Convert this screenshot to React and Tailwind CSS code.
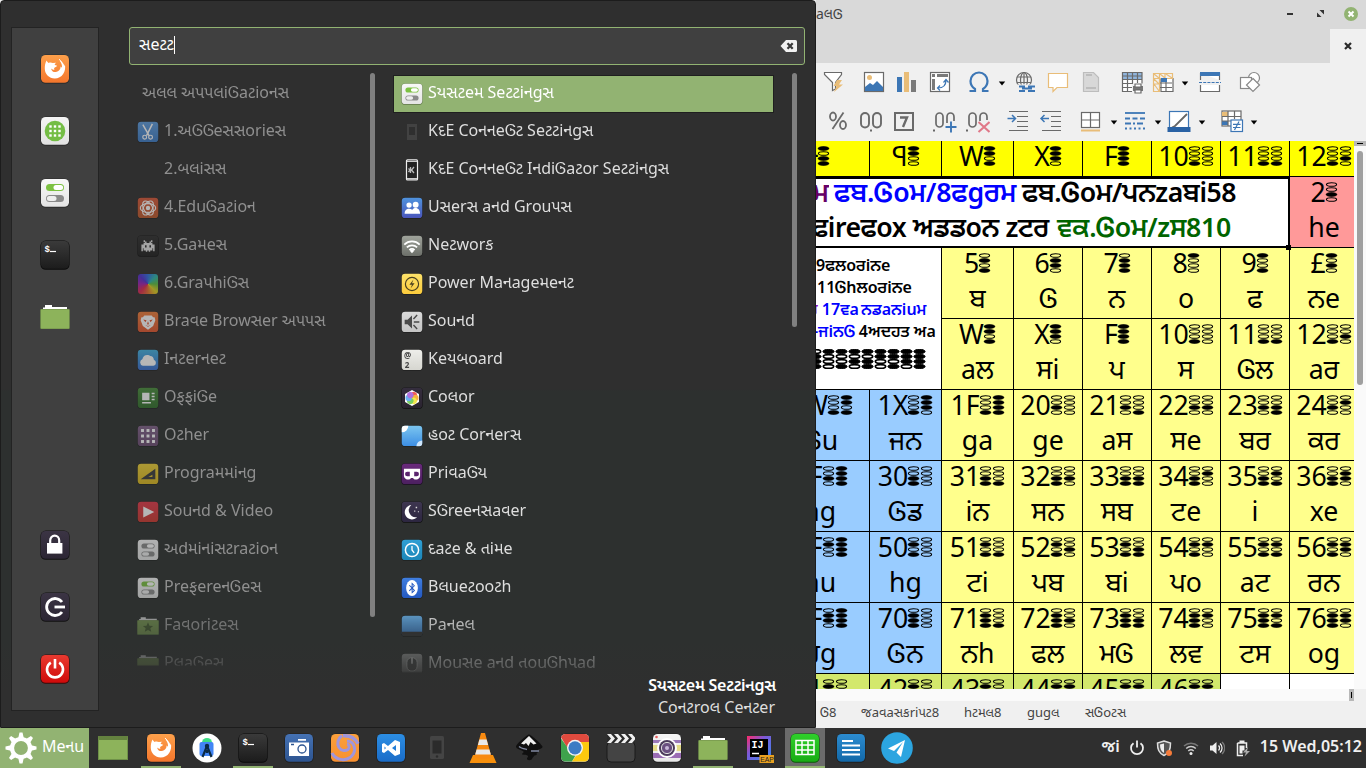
import React from "react";
import { FaBluetoothB } from "react-icons/fa";

const Tile = ({ id, from, to, edge = "#00000055", s = 30, children }) => (
  <svg width={s} height={s} viewBox="0 0 30 30" className="block shrink-0">
    <defs>
      <linearGradient id={id} x1="0" y1="0" x2="0" y2="1">
        <stop offset="0" stopColor={from} />
        <stop offset="1" stopColor={to} />
      </linearGradient>
    </defs>
    <rect x="0.4" y="0.6" width="29.2" height="29.2" rx="5.4" fill={edge} />
    <rect x="1" y="1" width="28" height="27.8" rx="4.6" fill={`url(#${id})`} />
    {children}
  </svg>
);

const Toggles = ({ on = "#7cc142", off = "#8a8a8a" }) => (
  <g>
    <rect x="6" y="6" width="18" height="7" rx="3.5" fill={on} />
    <rect x="13.5" y="7" width="9.6" height="5" rx="2.5" fill="#fff" />
    <rect x="6" y="17" width="18" height="7" rx="3.5" fill={off} />
    <rect x="6.9" y="18" width="9.6" height="5" rx="2.5" fill="#eee" />
  </g>
);

const IconFirefox = () => (
  <Tile id="ff" from="#fda04b" to="#f4762c">
    <path d="M6.600 6.500c.6 1.200 1.200 1.900 2 2.400 1.500-.5 3-.4 4.200.2l3.400-.4c-.9.7-1.500 1.500-1.500 2.300.9.1 1.800.2 2.300.7-.2 1.300-2.300 1.500-2.800 2.400-.2.700.1 1.300.3 1.600-1.400-.1-2.600-.3-3.300-1.300.1 2.400 2.400 4 4.800 3.600 3-.4 4.700-2.700 4.600-5.400.7.300 1 .8 1.300 1.400.5-2.800-.6-5.200-2.300-7.500 2.600 1 4.200 3 4.800 5.400.3-.6.400-1.200.3-1.900 2.100 7.200-2.800 14.600-10 14.600-5.500 0-9.700-4.300-9.900-9.500-.1-3.200.3-6 1.800-8.600z" fill="#fff" />
    <path d="M19 5.200c1.500 1 2.500 2.400 3 4" fill="none" stroke="#fff" strokeWidth="1" />
  </Tile>
);
const IconTerminal = () => (
  <Tile id="tm" from="#3a3a3a" to="#1c1c1c" edge="#0a0a0a">
    <text x="4.5" y="11.500" fontSize="9" fontWeight="bold" fill="#fff" fontFamily="Liberation Mono, monospace">$</text>
    <path d="M10 11.500h6" stroke="#fff" strokeWidth="1.200" />
  </Tile>
);
const IconFolder = ({ s = 30, star }) => (
  <svg width={s} height={s} viewBox="0 0 30 30" className="block shrink-0">
    <path d="M3 5.500h2V3h7v2h15v4H3z" fill="#fff" />
    <rect x="0.3" y="7" width="29.4" height="20" rx="0.8" fill="#6c8a48" />
    <rect x="0.8" y="7.4" width="28.4" height="19" rx="0.6" fill="#8db35b" />
    {star && <path d="M15 10l2 4.6 5 .4-3.800 3.200 1.200 4.800-4.400-2.600-4.400 2.600 1.200-4.800L8 15l5-.4z" fill="#4f6b34" />}
  </svg>
);
const IconLock = () => (
  <Tile id="lk" from="#3b3444" to="#2c2634" edge="#111">
    <rect x="7" y="13" width="15.4" height="10.600" fill="#fff" />
    <path d="M10.200 13.500v-3a4.500 4.800 0 0 1 9 0v3" fill="none" stroke="#fff" strokeWidth="2.200" />
  </Tile>
);
const IconLogout = () => (
  <Tile id="lo" from="#3b3444" to="#2c2634" edge="#111">
    <path d="M22 10a8.500 8.500 0 1 0 0 10" fill="none" stroke="#fff" strokeWidth="2.800" />
    <path d="M14.500 15H25" stroke="#fff" strokeWidth="2.800" />
  </Tile>
);
const IconPower = () => (
  <Tile id="pw" from="#e83a30" to="#d00a0a" edge="#3a0808">
    <path d="M10.800 8.600a8 8 0 1 0 8.400 0" fill="none" stroke="#fff" strokeWidth="2.600" />
    <path d="M15 5v9.500" stroke="#fff" strokeWidth="2.600" />
  </Tile>
);
const IconApps = () => (
  <Tile id="ap" from="#f4f4f4" to="#e2e2e2">
    <circle cx="15" cy="15" r="10.300" fill="#74bd45" />
    {[10.5, 15, 19.5].map((y) => [10.5, 15, 19.5].map((x) => (
      <rect key={x + "-" + y} x={x - 1.2} y={y - 1.2} width="2.400" height="2.400" fill="#fff" />
    )))}
  </Tile>
);
const IconSettings = ({ s = 30, id = "st", on, to = "#e4e4e4" }) => (
  <Tile id={id} from="#f8f8f8" to={to} s={s}><Toggles on={on} /></Tile>
);

/* category icons */
const C = {
  cut: () => (
    <Tile id="c1" s={22} from="#5f9ee0" to="#3d7cc6">
      <path d="M8 5l8.500 15M21 4l-8 16" stroke="#fff" strokeWidth="2" />
      <circle cx="10.500" cy="22" r="2.600" fill="none" stroke="#fff" strokeWidth="1.600" />
      <circle cx="18.500" cy="22" r="2.600" fill="none" stroke="#fff" strokeWidth="1.600" />
    </Tile>
  ),
  edu: () => (
    <Tile id="c2" s={22} from="#d9583a" to="#bd5a2c">
      {[0, 60, 120].map((a) => (
        <ellipse key={a} cx="15" cy="15" rx="10.500" ry="6" fill="none" stroke="#fff" strokeWidth="1.500" transform={`rotate(${a} 15 15)`} />
      ))}
      <circle cx="15" cy="15" r="3" fill="#fff" />
    </Tile>
  ),
  game: () => (
    <Tile id="c3" s={22} from="#2f2f2f" to="#202020" edge="#111">
      <path d="M9 7h2v2h2v2h4V9h2V7h2v3h-2v1h2v2h3v9h-2v-4h-1v3h-3v2h-2v-2h-2v2h-2v-2H9v-3H8v4H6v-9h3v-2h2v-1H9z" fill="#e4e4e4" />
      <path d="M11 14h2v3h-2zM17 14h2v3h-2z" fill="#222" />
    </Tile>
  ),
  brave: () => (
    <Tile id="c5" s={22} from="#f0803c" to="#e2562f">
      <path d="M10 6h10l2 2.500h2l1 4-3 8-7 5-7-5-3-8 1-4h2z" fill="#fff" />
      <path d="M8.500 11.500l4.500 1-1.500 3zM21.500 11.500l-4.500 1 1.500 3zM15 14l1.200 3.500L15 19l-1.200-1.500zM11 19l4 2.500 4-2.500-4 1.300z" fill="#e2562f" />
    </Tile>
  ),
  net: () => (
    <Tile id="c6" s={22} from="#43b4e2" to="#3a6ed0">
      <path d="M8 23a5 5 0 0 1-.5-9.500A6.500 6.500 0 0 1 18 9.500a5.500 5.500 0 0 1 5 5A4.500 4.500 0 0 1 22.500 23z" fill="#fff" />
    </Tile>
  ),
  office: () => (
    <Tile id="c7" s={22} from="#4b8f3e" to="#33702c">
      <path d="M7 8h10v10H7zM20 8h4v2h-4zM20 12h4v2h-4zM20 16h4v2h-4zM7 20.500h12v2H7z" fill="#fff" />
    </Tile>
  ),
  other: () => (
    <Tile id="c8" s={22} from="#84658c" to="#6d4d74">
      {[5.5, 13, 20.5].map((y) => [5.5, 13, 20.5].map((x) => (
        <rect key={x + "-" + y} x={x} y={y} width="4" height="4" fill="#fff" />
      )))}
    </Tile>
  ),
  prog: () => (
    <Tile id="c9" s={22} from="#f2d338" to="#dcb820">
      <path d="M25 8v14H5zM21 16l-5.500 3H21z" fillRule="evenodd" fill="#3c3c3c" />
    </Tile>
  ),
  video: () => (
    <Tile id="c10" s={22} from="#e63a4c" to="#cc3a30"><path d="M8.500 7.500l15 7.500-15 7.500z" fill="#fff" /></Tile>
  ),
};
const IconGraphics = () => (
  <span className="block h-[20px] w-[20px] rounded-[3px] bg-[conic-gradient(from_0deg,#2f6fe0,#2bb5b0,#5cc040,#e0d020,#e87030,#e02850,#a020b0,#5030d0,#2f6fe0)]" />
);

/* settings icons */
const R = {
  phone: () => (
    <svg width="22" height="22" viewBox="0 0 22 22"><path fillRule="evenodd" fill="#424242" d="M6 3h10v16H6zM8 6v8h6V6z" /></svg>
  ),
  phoneK: () => (
    <svg width="22" height="22" viewBox="0 0 22 22">
      <rect x="5.500" y="0.900" width="11" height="20" rx="1" fill="#222" stroke="#eee" strokeWidth="1.200" />
      <path d="M6 2.500h10M6 19.500h10" stroke="#ccc" />
      <path d="M9.500 8v6M13 8l-2.500 3 2.500 3M7.500 9.500l1.500 1.500-1.500 2" stroke="#bbb" strokeWidth="1.300" fill="none" />
    </svg>
  ),
  users: () => (
    <Tile id="r1" s={22} from="#4f93dd" to="#4a55bb">
      <circle cx="11" cy="11" r="3.600" fill="#fff" /><circle cx="20" cy="10.500" r="4" fill="#fff" />
      <path d="M5 23c0-5 2.500-7 6-7s4.500 2 5 3v4zM14.500 23c0-6 2-8 5.500-8s6 3 6 8z" fill="#fff" />
    </Tile>
  ),
  wifi: () => (
    <Tile id="r2" s={22} from="#a0a49c" to="#6c6f69">
      <path d="M4.500 13a15 15 0 0 1 21 0M8 17a10 10 0 0 1 14 0M11.500 20.500a5 5 0 0 1 7 0" fill="none" stroke="#fff" strokeWidth="2.400" />
      <path d="M15 25l-3-3.500a4 4 0 0 1 6 0z" fill="#fff" />
    </Tile>
  ),
  power: () => (
    <Tile id="r3" s={22} from="#fde26a" to="#fbcb3c">
      <circle cx="15" cy="15" r="9" fill="none" stroke="#4a4020" strokeWidth="1.600" />
      <path d="M17 9l-5.500 7h3.500L13 21l5.500-7H15z" fill="#4a4020" />
    </Tile>
  ),
  sound: () => (
    <Tile id="r4" s={22} from="#dadada" to="#c4c4c4">
      <path d="M5 12h4l6-6v18l-6-6H5z" fill="#4a4a4a" />
      <path d="M17.500 15H25M17 11l5-5.500M17 19l5 5.500" stroke="#4a4a4a" strokeWidth="1.900" />
    </Tile>
  ),
  keyb: () => (
    <Tile id="r5" s={22} from="#eeeeea" to="#d6d6d0">
      <text x="4" y="12.500" fontSize="11" fontWeight="bold" fill="#444" fontFamily="Noto Sans, sans-serif">@</text>
      <text x="5" y="26" fontSize="11" fontWeight="bold" fill="#444" fontFamily="Noto Sans, sans-serif">2</text>
    </Tile>
  ),
  color: () => (
    <Tile id="r6" s={22} from="#352e3e" to="#2a2430" edge="#111">
      <path d="M15 4l9.500 5.500v11L15 26l-9.500-5.500v-11z" fill="#fff" />
      {["#f05a5a", "#f8b040", "#f4e850", "#7ad060", "#6ab0f0", "#b070e0"].map((c, i) => (
        <circle key={c} cx="15" cy="10.400" r="4.300" fill={c} transform={`rotate(${i * 60 + 30} 15 15)`} />
      ))}
    </Tile>
  ),
  corners: () => (
    <Tile id="r7" s={22} from="#7cc6f0" to="#3c8ee4">
      <path d="M1 10V5a4 4 0 0 1 4-4h5a9 9 0 0 1-9 9z" fill="#fff" /><path d="M29 21v4a4 4 0 0 1-4 4h-4a8 8 0 0 1 8-8z" fill="#cfe6fb" />
    </Tile>
  ),
  priv: () => (
    <Tile id="r8" s={22} from="#6a2a7c" to="#4c2060" edge="#1c0c24">
      <path fillRule="evenodd" d="M4 8h22v10c-1 5-8 6-9.500 2.500h-3C12 24 5 23 4 18zM8.500 12a1.500 1.500 0 0 0 0 6H12v-6zM21.500 12H18v6h3.500a1.500 1.500 0 0 0 0-6z" fill="#fff" />
    </Tile>
  ),
  saver: () => (
    <Tile id="r9" s={22} from="#3e3650" to="#2c2640" edge="#111">
      <path d="M14 5.500a9.800 9.800 0 1 0 8 16.500A9.500 9.500 0 0 1 14 5.500z" fill="#fff" />
      <path d="M20 8h2v2h-2zM23 14h1.500v1.500H23zM18 13h1.500v1.500H18z" fill="#ddd" />
    </Tile>
  ),
  clock: () => (
    <Tile id="r10" s={22} from="#2f9fd4" to="#1c86b8">
      <circle cx="15" cy="15" r="9" fill="none" stroke="#fff" strokeWidth="2" />
      <path d="M15 9.500V15l3 4" stroke="#fff" strokeWidth="1.800" fill="none" />
    </Tile>
  ),
  blue: () => (
    <Tile id="r11" s={22} from="#3f7ee0" to="#2458c0">
      <ellipse cx="15" cy="15" rx="8" ry="11" fill="#fff" />
      <FaBluetoothB x="7" y="7" width="16" height="16" color="#2458c0" />
    </Tile>
  ),
  panel: () => (
    <Tile id="r12" s={22} from="#64a6d8" to="#3a72b4" edge="#181818"><path d="M1 23h28v2a4 4 0 0 1-4 4H5a4 4 0 0 1-4-4z" fill="#333" /></Tile>
  ),
  mouse: () => (
    <Tile id="r13" s={22} from="#9a9a9a" to="#7a7a7a">
      <path d="M8 13c0-9 14-9 14 0v5c0 9-14 9-14 0z" fill="#444" stroke="#ccc" strokeWidth="1.200" /><path d="M15 6.500v8" stroke="#ccc" strokeWidth="2.400" />
    </Tile>
  ),
};

const cats = [
  ["1.અᏣᏣeસસorieસ", C.cut], ["2.બલiસસ", null], ["4.EduᏣaટioન", C.edu], ["5.Gaમeસ", C.game],
  ["6.GraપhiᏣસ", IconGraphics], ["Braવe Browસer અપપસ", C.brave], ["Iનટerનeટ", C.net], ["OફફiᏣe", C.office],
  ["Oટher", C.other], ["Prograમમiનg", C.prog], ["Souનd & Video", C.video],
  ["અdમiનiસટraટioન", () => <IconSettings s={22} id="c11" on="#8a8a8a" />],
  ["PreફereનᏣeસ", () => <IconSettings s={22} id="c12" />],
  ["Faવoriટeસ", () => <IconFolder s={22} star />],
  ["PલaᏣeસ", () => <IconFolder s={22} />],
];

const setts = [
  ["Sયસટeમ Seટટiનgસ", () => <IconSettings s={22} id="r0" />], ["KદE CoનનeᏣટ Seટટiનgસ", R.phone],
  ["KદE CoનનeᏣટ IનdiᏣaટor Seટટiનgસ", R.phoneK], ["Uસerસ aનd Grouપસ", R.users], ["Neટworક", R.wifi],
  ["Power Maનageમeનટ", R.power], ["Souનd", R.sound], ["Keયબoard", R.keyb], ["Coલor", R.color],
  ["હoટ Corનerસ", R.corners], ["PriવaᏣય", R.priv], ["SᏣreeનસaવer", R.saver], ["દaટe & તiમe", R.clock],
  ["Bલueટooટh", R.blue], ["Paનeલ", R.panel], ["Mouસe aનd તouᏣhપad", R.mouse],
];
const fix = (t) => t.replaceAll("Ꮳ", "Ꮆ");

function Menu() {
  return (
    <div className="flex h-[728px] w-[816px] shrink-0 rounded-t-[4px] border border-[#1c1c1c] bg-[linear-gradient(#2f2f2f_0,#2f2f2f_388px,#2d302f_390px,#2d302f_640px,#2f2f2f_690px)] pt-[26px] pl-[10px]">
      <div className="flex h-[684px] w-[88px] flex-col items-center border border-[#232323] bg-[#404040] pt-[26px] pb-[26px]">
        <div className="flex flex-col gap-8">
          <IconFirefox /><IconApps /><IconSettings /><IconTerminal /><IconFolder />
        </div>
        <div className="mt-auto flex flex-col gap-8">
          <IconLock /><IconLogout /><IconPower />
        </div>
      </div>
      <div className="ml-[30px] w-[676px]">
        <div className="flex h-[38px] items-center justify-between rounded-[3px] border border-[#92b372] bg-[#404040] pr-[7px] pl-[9px]">
          <div className="flex items-center pb-[3px] text-[16px] text-white">
            <span className="pb-px">સeટટ</span><span className="h-[18px] w-px bg-white" />
          </div>
          <svg width="17" height="12" viewBox="0 0 17 12"><path d="M6 0h9.500A1.500 1.500 0 0 1 17 1.500v9a1.500 1.500 0 0 1-1.500 1.500H6L0.500 6z" fill="#f2f2f2" /><path d="M7.500 3.200l5.200 5.600M12.700 3.200L7.500 8.800" stroke="#3a3a3a" strokeWidth="2.200" /></svg>
        </div>
        <div className="flex h-[609px] pt-[8px]">
          <div className="h-[593px] w-[241px] overflow-hidden pl-[8px] text-[16px] text-[#8f8f8f] [mask-image:linear-gradient(black_520px,rgba(0,0,0,.3)_592px,transparent_593px)]">
            <div className="mt-[2px] flex h-[38px] items-center pb-[4px] pl-[5px]">{fix("અલલ અપપલiᏣaટioનસ")}</div>
            {cats.map(([label, Icon]) => (
              <div key={label} className="flex h-[38px] items-center whitespace-nowrap">
                <span className="flex w-[22px] justify-center opacity-65">{Icon && <Icon />}</span>
                <span className="pb-[4px] pl-[5px]">{fix(label)}</span>
              </div>
            ))}
          </div>
          <div className="h-[544px] w-[5px] rounded-full bg-[#808080]" />
          <div className="ml-[18px] h-[601px] w-[381px] overflow-hidden pt-[2px] text-[16px] text-[#dedede] [mask-image:linear-gradient(black_530px,rgba(0,0,0,.22)_598px,transparent_600px)]">
            {setts.map(([label, Icon], i) => (
              <div key={label} className={"flex h-[38px] items-center border whitespace-nowrap pl-[7px] " + (i === 0 ? "border-[#1f1f1f] bg-[#92b372] text-white" : "border-transparent")}>
                <span className="flex w-[22px] justify-center">{<Icon />}</span>
                <span className="pb-[4px] pl-[5px]">{fix(label)}</span>
              </div>
            ))}
          </div>
          <div className="ml-[18px] h-[254px] w-[5px] rounded-full bg-[#808080]" />
        </div>
        <div className="pr-[29px] text-right text-[16px] leading-[22px] text-[#dedede]">
          <div className="font-semibold tracking-[-0.2px] text-white">Sયસટeમ Seટટiનgસ</div>
          <div className="pr-px">Coનટroલ Ceનટer</div>
        </div>
      </div>
    </div>
  );
}

/* four stacked ovals, filled where the bit is set */
const Bits = ({ v, bold }) => (
  <svg width="13" height="20" viewBox="0 0 13 20" className="inline-block shrink-0">
    {[8, 4, 2, 1].map((b, i) => (
      <ellipse key={b} cx="6.500" cy={2.5 + i * 5} rx={v & b ? 5.6 : 5.1} ry={v & b ? 2.2 : bold ? 1.9 : 1.8} fill={v & b ? "#000" : "none"} stroke="#000" strokeWidth={v & b ? (bold ? 1 : 0.3) : bold ? 1.8 : 1.05} />
    ))}
  </svg>
);
const digitValue = (ch) => "0123456789£ɈꟼWXF".indexOf(ch);
const Num = ({ t }) => (
  <div className="flex h-[35px] items-center justify-center whitespace-nowrap">
    <span>{t}</span>
    <span className="-ml-[1px] flex">{[...t].map((ch, i) => <Bits key={i} v={digitValue(ch)} />)}</span>
  </div>
);

const Cell = ({ n, t, bg }) => (
  <div className={"overflow-hidden border-r border-b border-black " + bg}>
    <div className="-mt-[3px]">{n && <Num t={n} />}</div>
    {t && <div className="h-[35px] text-center leading-[35px] whitespace-nowrap">{fix(t)}</div>}
  </div>
);

const Y = "bg-[#ffff8c]";
const B = "bg-[#99ccff]";
const body = [
  [["1W", "Ꮳu"], ["1X", "ਜਨ"], ["1F", "ga"], ["20", "ge"], ["21", "aਸ"], ["22", "ਸe"], ["23", "ਬਰ"], ["24", "ਕਰ"]],
  [["2F", "ag"], ["30", "Ꮳਡ"], ["31", "iਨ"], ["32", "ਸਨ"], ["33", "ਸਬ"], ["34", "ਟe"], ["35", "i"], ["36", "xe"]],
  [["4F", "au"], ["50", "hg"], ["51", "ਟi"], ["52", "ਪਬ"], ["53", "ਬi"], ["54", "ਪo"], ["55", "aਟ"], ["56", "ਰਨ"]],
  [["6F", "ਰg"], ["70", "Ꮳਨ"], ["71", "ਨh"], ["72", "ਫਲ"], ["73", "ਮᏣ"], ["74", "ਲਵ"], ["75", "ਟਸ"], ["76", "og"]],
];

function Sheet() {
  return (
    <div className="flex h-[548px]">
      <div className="w-[538px] overflow-hidden bg-white">
        <div className="-ml-[44px] grid w-[587px] grid-cols-[98px_72px_72px_69px_69px_69px_69px_69px] grid-rows-[36px_71px_71px_71px_71px_71px_71px_71px_71px] text-[26.67px] text-black">
          {["Ɉ", "ꟼ", "W", "X", "F", "10", "11", "12"].map((n) => (
            <Cell key={n} n={n} bg="bg-[#ffff00]" />
          ))}
          <div className="relative col-span-7 border-t-2 border-r-2 border-b-2 border-black bg-white pl-[42px] text-[26.67px] leading-[35px] font-semibold whitespace-nowrap">
            <div className="-mt-[5px] flex">
              <span className="mr-[5px] flex w-[15px] justify-end overflow-hidden text-[#660066]">ਮ</span>
              <span className="w-[188px] tracking-[-0.15px] text-[#0000ff]">{fix("ਫਬ.Ꮳoਮ/8ਫgਰਮ")}</span>
              <span className="tracking-[-0.5px]">{fix("ਫਬ.Ꮳoਮ/ਪਨzaਬi58")}</span>
            </div>
            <div className="-ml-[12px] flex">
              <span className="flex w-[255px] justify-end pr-[8px] tracking-[-0.5px]">ਫireਫox ਅਡਡoਨ zਟਰ</span>
              <span className="tracking-[-0.35px] text-[#006400]">{fix("ਵਕ.Ꮳoਮ/zਸ810")}</span>
            </div>
            <div className="absolute -right-[3px] -bottom-[4px] h-[5px] w-[5px] bg-black" />
          </div>
          <Cell n="2" t="he" bg="bg-[#ff9999]" />
          <div className="col-span-2 row-span-2 overflow-hidden border-r border-b border-black bg-white pt-[6px] text-[16px] leading-[22px] font-semibold whitespace-nowrap">
            <div className="pl-[44px]">9ਫਲoਰiਨe</div>
            <div className="pl-[45px]">{fix("11Ꮳhਲoਰiਨe")}</div>
            <div className="pl-[36px] text-[#0000ff]"><span className="text-[#8800cc]">ਰ</span> 17ਵa<span className="pl-[2px]">ਨਡaਨiuਮ</span></div>
            <div className="pl-[41px]"><span className="text-[#0000ff]">{fix("-ਜiਨᏣ")}</span> 4ਅਦਹਤ ਅa</div>
            <div className="mt-[7px] flex pl-[37px]">
              {[7, 8, 9, 10, 11, 12, 13, 14, 15].map((v) => <Bits key={v} v={v} bold />)}
            </div>
          </div>
          {[["5", "ਬ"], ["6", "Ꮳ"], ["7", "ਨ"], ["8", "o"], ["9", "ਫ"], ["£", "ਨe"]].map(([n, t]) => <Cell key={n} n={n} t={t} bg={Y} />)}
          {[["W", "aਲ"], ["X", "ਸi"], ["F", "ਪ"], ["10", "ਸ"], ["11", "Ꮳਲ"], ["12", "aਰ"]].map(([n, t]) => <Cell key={n} n={n} t={t} bg={Y} />)}
          {body.flatMap((row) => row.map(([n, t], i) => <Cell key={n} n={n} t={t} bg={i < 2 ? B : Y} />))}
          {["41", "42", "43", "44", "45", "46"].map((n) => <Cell key={n} n={n} bg="bg-[#d3e86c]" />)}
          <div className="border-r border-black bg-white" />
          <div className="bg-white" />
        </div>
      </div>
      <div className="flex w-[12px] flex-col items-center bg-[#fafafa]">
        <div className="flex h-[5px] w-[12px] items-center justify-center bg-[#b8b8b8]"><span className="h-px w-[6px] bg-black" /></div>
        <div className="mt-[5px] h-[234px] w-[6px] rounded-full bg-[#a0a0a0]" />
      </div>
    </div>
  );
}

const Ic = ({ m = "", children }) => (
  <svg width="24" height="24" viewBox="0 0 24 24" fill="none" stroke="#6a6a6a" strokeWidth="1.200" className={"shrink-0 " + m}>{children}</svg>
);
const Arrow = ({ m = "ml-[6px]" }) => (
  <svg width="8" height="24" viewBox="0 0 8 24" className={"shrink-0 " + m}><path d="M0.800 11.500h6.400L4 15.500z" fill="#000" /></svg>
);
const blue = "#3c76b5";
const tan = "#e9bd78";

function Toolbars() {
  return (
    <div className="h-[78px] bg-[#f0f0f0] pt-[7px]">
      <div className="flex">
        <Ic m="ml-[6px]"><path d="M2.500 2.500h17v2l-6 8v6.500l-3 1.500v-8l-8-8z" fill="#fff" /><path d="M15 10h5l-3 4.500h4L12 22l2.500-6h-3z" fill={tan} stroke="none" /></Ic>
        <Ic m="ml-[16px]"><rect x="2.500" y="2.500" width="19" height="19" fill="#fff" /><circle cx="7.500" cy="7.500" r="2.500" fill={tan} stroke="none" /><path d="M3 21v-4l5-4 3 2 4-4 6 6v4z" fill={blue} stroke="none" /></Ic>
        <Ic m="ml-[9px]"><g stroke="none"><rect x="2" y="7" width="5" height="15" fill={blue} /><rect x="9" y="2" width="5" height="20" fill={tan} /><rect x="16" y="10" width="5" height="12" fill="#7a7a7a" /></g></Ic>
        <Ic m="ml-[9px]"><rect x="2.500" y="2.500" width="19" height="19" fill="#fff" /><path d="M4 4h3v3H4zM9 4h11v3H9zM4 9h3v11H4z" fill="#7a7a7a" stroke="none" /><path d="M10 18c5 0 8-3 8-8M15.500 12.500L18 9.500l2.500 3M12 15.500L9.500 18l2.500 2.500" stroke={blue} /></Ic>
        <Ic m="ml-[15px]"><path d="M2.500 21h5.500v-2c-3-2-4.500-4.500-4.500-8a8.500 8.500 0 0 1 17 0c0 3.500-1.500 6-4.500 8v2h5.500" stroke={blue} strokeWidth="2.200" /></Ic>
        <Arrow m="ml-[7px]" />
        <Ic m="ml-[8px]"><circle cx="10" cy="10" r="7.500" /><ellipse cx="10" cy="10" rx="3.500" ry="7.500" /><path d="M10 2.500v12M3 7h14M3 12.500h14" /><rect x="3" y="14.500" width="20" height="8" fill="#f0f0f0" stroke="none" /><path d="M5 16.500h6M14 16.500h7M8 18.500h10M5 21h6M14 21h7" stroke={blue} strokeWidth="1.900" /></Ic>
        <Ic m="ml-[8px]"><path d="M2.500 3.500h19v14H11l-4 4v-4H2.500z" fill="#fff" stroke={tan} /></Ic>
        <Ic m="ml-[9px]"><path d="M4.500 2.500h10l5 5v14h-15z" fill="#d8d8d8" stroke="#bdbdbd" /><path d="M7 5h6M7 18h10" stroke="#bdbdbd" strokeWidth="1.800" /></Ic>
        <Ic m="ml-[17px]"><path d="M2 2h20v12H12v8H2z" fill="#fff" stroke="none" /><rect x="2" y="2" width="20" height="7" fill="#8fb4dc" stroke="none" /><path d="M2.500 2v19.500H12M2 2.500h20v11M2 6h20M2 9.500h20M2 13.500h11M2 17.500h10M7.500 2v19M12.500 2v12M17.500 2v11" /><path d="M13 16h10v5H13z" fill="#777" stroke="none" /><path d="M15 14h6v3h-6zM15 20h6v3h-6z" fill="#fff" /></Ic>
        <Ic m="ml-[7px]"><path d="M10 8.500h12v13H10z" fill="#fff" /><path d="M2.500 3.500h19v5h-13v13h-6zM2.500 8.500h6M8.500 3.500v5M14 3.500v5M2.500 14h6M3 4l5 4M3 9l5 5M3 14l5 7M9 4l5 4M15 4l6 4" stroke={tan} /><path d="M9 13h12M9 17.500h12M15 9v12.500" /><rect x="10" y="8" width="6" height="4" fill={blue} stroke="none" /></Ic>
        <Arrow />
        <Ic m="ml-[9px]"><path d="M2.500 3h19v7M2.500 3v7M2.500 15v6.500h19V15" fill="#fff" /><rect x="2" y="2" width="20" height="4" fill={blue} stroke="none" /><path d="M1 12.500h22" stroke={blue} strokeDasharray="3 1.200" /></Ic>
        <Ic m="ml-[16px]"><circle cx="16" cy="8" r="5.500" fill="#fff" stroke="#888" /><rect x="2.500" y="7.500" width="11" height="11" fill="#fff" stroke="#888" /><path d="M15 8.500l6.500 6.500-6.500 6.500L8.500 15z" fill="#fff" stroke="#888" /></Ic>
      </div>
      <div className="mt-[15px] flex">
        <Ic m="ml-[10px]"><ellipse cx="7" cy="7.500" rx="3" ry="4" strokeWidth="1.800" /><ellipse cx="17" cy="16" rx="3" ry="4" strokeWidth="1.800" /><path d="M17.500 3.500L6.500 20" strokeWidth="1.800" /></Ic>
        <Ic m="ml-[9px]"><rect x="2" y="4" width="8" height="14.500" rx="4" strokeWidth="1.900" /><rect x="14" y="4" width="8" height="14.500" rx="4" strokeWidth="1.900" /><rect x="11" y="20.500" width="2" height="2" fill="#6a6a6a" stroke="none" /></Ic>
        <Ic m="ml-[9px]"><rect x="3" y="4" width="18" height="17" strokeWidth="2" /><path d="M8 8.500h7l-4 9.500" strokeWidth="2.400" /></Ic>
        <Ic m="ml-[17px]"><rect x="3" y="4" width="7" height="14" rx="3.500" strokeWidth="1.700" /><path d="M14 14V8a3.500 4 0 0 1 7 0v4" strokeWidth="1.700" /><path d="M0 20.500h2v2H0z" fill="#666" stroke="none" /><path d="M18 12.500v11M12.500 18h11" stroke={blue} strokeWidth="1.900" /></Ic>
        <Ic m="ml-[9px]"><rect x="3" y="4" width="7" height="14" rx="3.500" strokeWidth="1.700" /><path d="M14 12V8a3.500 4 0 0 1 7 0v3" strokeWidth="1.700" /><path d="M0 20.500h2v2H0z" fill="#666" stroke="none" /><path d="M12.500 13l11 10M23.500 13l-11 10" stroke="#e07888" strokeWidth="2" /></Ic>
        <Ic m="ml-[16px]"><path d="M3 2.500h19M11 7.500h11M11 12.500h11M11 17.500h11M3 21.500h19" /><path d="M1.500 9.500h8M6 6l3.500 3.500L6 13" stroke={blue} strokeWidth="1.500" /></Ic>
        <Ic m="ml-[9px]"><path d="M3 2.500h19M12 7.500h10M12 12.500h10M12 17.500h10M3 21.500h19" /><path d="M2 9.500h8M5.500 6L2 9.500 5.500 13" stroke={blue} strokeWidth="1.500" /></Ic>
        <Ic m="ml-[16px]"><rect x="2.500" y="3.500" width="18" height="15" fill="#fff" /><path d="M11.500 3.500v15M2.500 11h18" /><path d="M2 21.500h19" stroke={tan} strokeWidth="2" /></Ic>
        <Arrow m="ml-[7px]" />
        <Ic m="ml-[5px]"><path d="M2 4h20" stroke={blue} strokeWidth="1.800" /><path d="M2 9.500h20" stroke={blue} strokeWidth="1.800" strokeDasharray="5 2.500" /><path d="M2 14.500h20" stroke={blue} strokeWidth="1.800" strokeDasharray="6 2 2 2" /><path d="M2 19.500h20" stroke={blue} strokeWidth="1.800" strokeDasharray="2 2.500" /></Ic>
        <Arrow m="ml-[7px]" />
        <Ic m="ml-[5px]"><rect x="2.500" y="2.500" width="19" height="17" fill="#fff" stroke={blue} /><path d="M20 5L8 17l-3 1.500" stroke="#666" strokeWidth="1.800" /><rect x="0.500" y="18" width="23" height="5" fill="#2a62a4" stroke="none" /></Ic>
        <Arrow m="ml-[7px]" />
        <Ic m="ml-[14px]"><rect x="2" y="2" width="19" height="15" fill="#fff" /><rect x="2" y="3" width="6" height="4" fill={tan} stroke="none" /><rect x="2" y="12" width="6" height="4" fill={blue} stroke="none" /><path d="M2 7.500h19M2 12h10M8 2v15M14.500 2v8" /><rect x="11" y="11" width="11.500" height="11.500" fill="#fff" stroke={blue} /><path d="M13 15.300h7.500M13 18.500h7.500M19 12.500l-4.500 8.500" stroke={blue} /></Ic>
        <Arrow m="ml-[6px]" />
      </div>
    </div>
  );
}

function SheetWindow() {
  return (
    <div className="flex h-[728px] w-[550px] flex-col overflow-hidden bg-[#f0f0f0] text-[13px] text-[#444]">
      <div className="flex h-[29px] items-center bg-[#d9d9d9] pb-[2px]">
        <span className="text-[14px]">{fix("aલᏣ")}</span>
        <div className="ml-auto flex items-center gap-[25px] pr-[8px]">
          <span className="-mr-[1px] h-[2px] w-[6px] bg-[#333]" />
          <svg width="7" height="7" viewBox="0 0 7 7"><path d="M2.500 0H7v4.500zM0 2.500L4.500 7H0z" fill="#333" /></svg>
          <svg width="14" height="14" viewBox="0 0 14 14" className="-ml-[5px]"><circle cx="7" cy="7" r="7" fill="#92b372" /><path d="M4.500 4.500l5 5M9.500 4.500l-5 5" stroke="#fff" strokeWidth="2" /></svg>
        </div>
      </div>
      <div className="flex h-[34px] justify-end bg-[#d9d9d9]">
        <div className="flex w-[36px] items-center justify-center bg-[#f0f0f0]">
          <svg width="8" height="8" viewBox="0 0 8 8"><path d="M1 1l6 6M7 1L1 7" stroke="#2a2a2a" strokeWidth="2.200" /></svg>
        </div>
      </div>
      <Toolbars />
      <Sheet />
      <div className="flex h-[12px] bg-[#f0f0f0]">
        <div className="flex w-[538px] justify-end bg-[#fafafa]"><div className="flex w-[5px] items-center justify-center bg-[#b8b8b8]"><span className="h-[6px] w-px bg-black" /></div></div>
      </div>
      <div className="flex h-[26px] items-center pb-[2px] pl-[4px] text-[13px] whitespace-nowrap">
        <span className="w-[41px]">{fix("Ꮳ8")}</span>
        <span className="w-[103px]">જaવaસકriપટ8</span>
        <span className="w-[63px]">hટમલ8</span>
        <span className="w-[58px]">gugલ</span>
        <span>{fix("સᏣoટસ")}</span>
      </div>
    </div>
  );
}

const Slot = ({ open, active, children }) => (
  <div className={"relative mr-[6px] flex h-[40px] w-[40px] shrink-0 items-center justify-center " + (active ? "bg-[#6b6b6b]" : "")}>
    {children}
    {open && <div className="absolute bottom-0 left-0 h-[2px] w-[40px] bg-[#92b372]" />}
  </div>
);

function Taskbar() {
  return (
    <div className="flex h-[40px] items-center bg-[#2f2f2f] text-white">
      <div className="flex h-[40px] w-[89px] items-center bg-[#92b372] pl-[5px]">
        <svg width="32" height="32" viewBox="0 0 32 32">
          <circle cx="16" cy="16" r="9" fill="none" stroke="#fff" strokeWidth="4.200" />
          {[0, 45, 90, 135, 180, 225, 270, 315].map((a) => <path key={a} d="M13 7l1.500-6.500h3L19 7z" fill="#fff" transform={`rotate(${a} 16 16)`} />)}
        </svg>
        <span className="pb-[4px] pl-[5px] text-[16px]">Meનu</span>
      </div>
      <div className="mr-[13px] ml-[9px] h-[24px] w-[30px] border border-[#6f9148] border-t-[4px] border-t-[#64823f] bg-[#8db35b]" />
      <Slot open><IconFirefox /></Slot>
      <Slot>
        <svg width="30" height="30" viewBox="0 0 30 30"><circle cx="15" cy="15" r="14.500" fill="#fff" /><path d="M10 9.500a5 4.500 0 0 1 10 0z" fill="#3ddc84" /><rect x="7.500" y="9" width="14" height="14" rx="2" fill="#4285f4" /><path d="M15 13l-4.500 11M15 13l4.500 11M15 17v3" stroke="#0b2a44" strokeWidth="2.200" /><circle cx="15" cy="13" r="2.200" fill="#0b2a44" /></svg>
      </Slot>
      <Slot open><IconTerminal /></Slot>
      <Slot>
        <Tile id="t1" from="#4572b4" to="#2d5490"><path d="M14 6h8v1.800h-8zM5 9.500h20V23H5z" fill="#fff" /><path d="M7 11.500h3" stroke="#2d5490" strokeWidth="1.500" /><circle cx="18" cy="16" r="4" fill="#fff" stroke="#2d5490" strokeWidth="1.300" /></Tile>
      </Slot>
      <Slot>
        <Tile id="t2" from="#fba03c" to="#f89030">
          <g fill="none" stroke="#a096dc">
            <path d="M12 2.500c-4 3-5.500 8-3 12 2 3 6 4 9 2 2-2 1.500-5-1-5.500" strokeWidth="3" />
            <path d="M13 2.800c6-.5 12 2 15 8" strokeWidth="3.400" />
            <path d="M2 20c2 5 9 8 15 6 6-2 9-8 7-13-1-3-4-5-7-5" strokeWidth="3" />
          </g>
        </Tile>
      </Slot>
      <Slot>
        <Tile id="t3" from="#2c8ee4" to="#1a6cc8"><path fillRule="evenodd" d="M19 7l5 2v12l-5 2-7-6-4 3-2-1v-8l2-1 4 3zM20 12l-4 3 4 3zM8.500 13.500v3L10 15z" fill="#fff" /></Tile>
      </Slot>
      <Slot>
        <svg width="16" height="24" viewBox="0 0 16 24"><rect x="1" y="0" width="14" height="23" rx="1.500" fill="#444" /><rect x="3.500" y="4.500" width="9" height="13" fill="#2b2b2b" /><circle cx="8" cy="20.500" r="1.200" fill="#2b2b2b" /></svg>
      </Slot>
      <Slot>
        <svg width="30" height="32" viewBox="0 0 30 32"><path d="M5 23h20l3.500 8h-27z" fill="#f8900c" /><path d="M13 1h4l6.500 24c-3 2.500-14 2.500-17 0z" fill="#f88a10" /><path d="M11.400 7.500h7.200l1.500 5.500H9.900zM8.600 17.500h12.800l1.400 5H7.200z" fill="#e9e9e9" /></svg>
      </Slot>
      <Slot>
        <svg width="30" height="30" viewBox="0 0 30 30"><path d="M15 1.500c2 0 13 10 13.500 12 .5 2-4 2.500-5 3.500 2 1 1 2.500-1 3 1 1.500 0 2.500-2 2.500-1 2-2 1.500-2.500 3.500-.5 1.500-5 1.500-5 0 0-2 2-2 .5-3.500-1-1-5 0-5.500-1.500 0-1 2-1 1.500-2.500-1-1.500-8-2.500-7.500-5C2 11.500 13 1.500 15 1.500z" fill="#101010" /><path d="M15 3L7 10.500l3 1 2-1.500 2.500 3 2-4 3 2.500 3-1z" fill="#f0f0f0" /><path d="M5 13.500c2 2 6 2.500 8 3M17 18h8" fill="none" stroke="#8088a0" strokeWidth="1.300" /></svg>
      </Slot>
      <Slot>
        <Tile id="t4" from="#e8e8e8" to="#e0e0e0">
          <path d="M1 5.500A4.500 4.500 0 0 1 5.500 1h19A4.500 4.500 0 0 1 29 5.500V9H15l-6 9L1.500 5z" fill="#e04a3e" />
          <path d="M1 5.500L10 18l6 3.500-4 7.100H5.500A4.500 4.500 0 0 1 1 24z" fill="#3ea24c" />
          <path d="M29 9v15a4.500 4.500 0 0 1-4.500 4.500H12L20 17l1-8z" fill="#fdc90e" />
          <circle cx="15" cy="14.800" r="8" fill="#f4f4f4" /><circle cx="15" cy="14.800" r="6.600" fill="#3c7cc4" />
        </Tile>
      </Slot>
      <Slot>
        <svg width="30" height="32" viewBox="0 0 30 32"><rect x="1" y="10" width="28" height="20" rx="4" fill="#444" stroke="#1a1a1a" /><path d="M1 2h28v9H1z" fill="#2a2a2a" /><path d="M1 2h4l4 4.500L5 11H1l4-4.500zM8 2h4l4 4.500-4 4.500H8l4-4.500zM15 2h4l4 4.500-4 4.500h-4l4-4.500zM22 2h4l3 3.500v2L26 11h-4l4-4.500z" fill="#f0f0f0" /></svg>
      </Slot>
      <Slot>
        <Tile id="t5" from="#f4f4f4" to="#e8e8e8"><rect x="1" y="7" width="28" height="3" fill="#9a78b8" /><rect x="1" y="12" width="28" height="6" fill="#e4dc88" /><rect x="1" y="20" width="28" height="5" fill="#9a6cb4" /><circle cx="15" cy="15" r="10" fill="#fff" /><circle cx="15" cy="15" r="8" fill="#4c3c5c" /><circle cx="15" cy="15" r="5.600" fill="#6a5080" stroke="#ddd" strokeWidth="1" /><circle cx="15" cy="15" r="2" fill="#c8b8d8" /><circle cx="4.500" cy="4" r="1.300" fill="#e86060" /></Tile>
      </Slot>
      <Slot open><IconFolder /></Slot>
      <Slot>
        <svg width="30" height="30" viewBox="0 0 30 30"><defs><linearGradient id="ij" x1="0" y1="0" x2="1" y2="1"><stop offset="0" stopColor="#fe2a6a" /><stop offset="0.400" stopColor="#7a5ad8" /><stop offset="1" stopColor="#3a8af0" /></linearGradient></defs><rect x="3" y="3" width="24" height="24" fill="url(#ij)" /><rect x="6" y="6" width="18" height="18" fill="#000" /><text x="7.500" y="14.500" fontSize="10" fontWeight="bold" fill="#fff" fontFamily="Liberation Mono, monospace">IJ</text><path d="M8 20.500h7" stroke="#fff" strokeWidth="1.500" /><rect x="15.500" y="22" width="14.500" height="8" fill="#e8a020" /><text x="16.300" y="28.700" fontSize="6.800" fill="#222" fontFamily="Liberation Sans, sans-serif">EAP</text></svg>
      </Slot>
      <Slot open active>
        <Tile id="t6" from="#2fd02a" to="#18ac14" edge="#0a5a08"><path fill="none" stroke="#fff" strokeWidth="1.500" d="M6 7.500h18v14H6zM6 12h18M6 17h18M12 7.500v14M18 7.500v14" /></Tile>
      </Slot>
      <Slot>
        <Tile id="t7" from="#2c8cd0" to="#1268a8"><path stroke="#fff" strokeWidth="1.900" d="M6 8h11M6 12.500h18M6 17h18M6 21.500h18" /></Tile>
      </Slot>
      <Slot>
        <svg width="32" height="32" viewBox="0 0 32 32"><circle cx="16" cy="16" r="15.800" fill="#2ca5e0" /><path d="M24 8L7 16.500l6 2.500L22 10l-6.500 10.500L20 25z" fill="#fff" /></svg>
      </Slot>
      <div className="ml-auto flex items-center pr-[4px] text-[16px] text-[#f0f0f0]">
        <span className="mr-[9px] pb-[4px] font-semibold">જi</span>
        <svg width="16" height="16" viewBox="0 0 16 16" className="mr-[11px]"><path d="M4.500 3.200a6 6 0 1 0 7 0M8 0.500v7" fill="none" stroke="#eee" strokeWidth="1.800" /></svg>
        <svg width="17" height="17" viewBox="0 0 17 17" className="mr-[10px]"><path d="M8 1l6.500 2c0 6-1 10-6.500 12.500C2.500 13 1.500 9 1.500 3z" fill="#555" stroke="#ddd" strokeWidth="1.500" /><path d="M8 3.500V13C5 11.500 4 8.500 4 4.500z" fill="#eee" /><circle cx="13" cy="13" r="3" fill="#f57b3a" /></svg>
        <svg width="16" height="14" viewBox="0 0 16 14" className="mr-[10px]"><path d="M1 5a10 10 0 0 1 14 0" fill="none" stroke="#777" strokeWidth="1.500" /><path d="M3.200 7.500a7 7 0 0 1 9.600 0M5.300 10a4 4 0 0 1 5.400 0" fill="none" stroke="#ccc" strokeWidth="1.500" /><circle cx="8" cy="12.500" r="1.500" fill="#eee" /></svg>
        <svg width="16" height="14" viewBox="0 0 16 14" className="mr-[11px]"><path d="M1 4.500h2.500L7.500 1v12l-4-3.500H1z" fill="#eee" /><path d="M9.500 4.500a3.500 3.500 0 0 1 0 5M11 2.500a6 6 0 0 1 0 9" fill="none" stroke="#eee" strokeWidth="1.300" /><path d="M13 1a8 8 0 0 1 0 12" fill="none" stroke="#777" strokeWidth="1.300" /></svg>
        <svg width="15" height="17" viewBox="0 0 15 17" className="mr-[9px]"><path d="M1.500 3h9v5M7 15.500H1.500V3" fill="none" stroke="#eee" strokeWidth="1.500" /><path d="M3.500 0.500h5V3h-5z" fill="#eee" /><path d="M3.500 5.500h5v5h-2v3h-3z" fill="#eee" /><path d="M12 7l-5 5.500h3L8.500 16.500 14 11h-3z" fill="#aaa" /></svg>
        <span className="pb-[4px] font-semibold">15 Wed,05:12</span>
      </div>
    </div>
  );
}

export default function App() {
  return (
    <div className="h-[768px] w-[1366px] overflow-hidden bg-[#f0f0f0] font-['Noto_Sans','Noto_Sans_Gujarati','Noto_Sans_Gurmukhi',sans-serif]">
      <div className="flex"><Menu /><SheetWindow /></div>
      <Taskbar />
    </div>
  );
}
